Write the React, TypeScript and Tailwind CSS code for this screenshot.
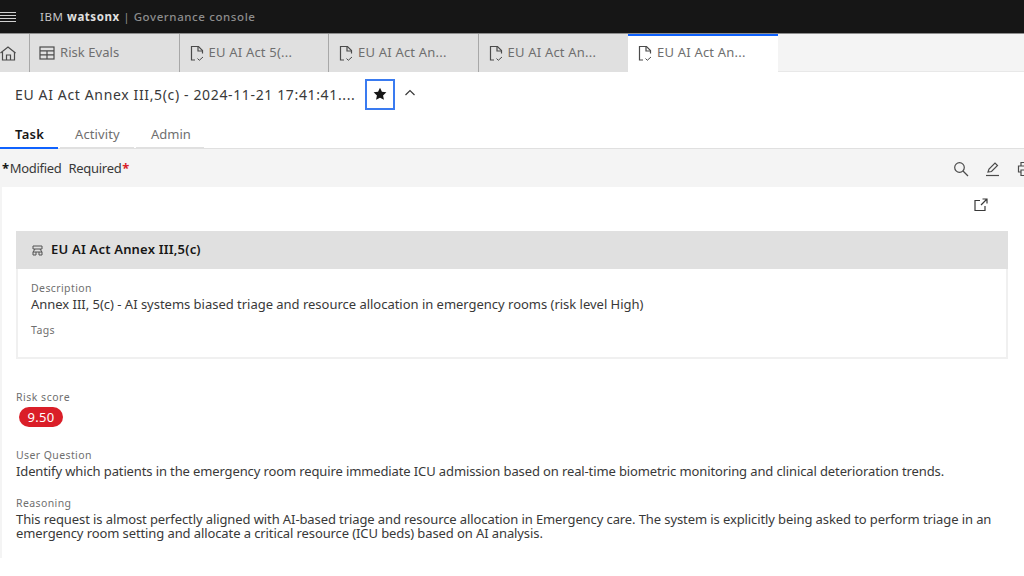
import React from 'react';

const Doc = () => (
  <svg width="15" height="17" viewBox="0 0 15 17" fill="none" stroke="#4b4b4b" strokeWidth="1.2" className="shrink-0">
    <path d="M5 15H1.500V1.500h7l4 4v3" />
    <path d="M8 1.500v4.500h4.500" />
    <path d="M7.500 13.500l1.800 1.800 3.700-3.300" strokeWidth="1" />
  </svg>
);

const Tab = ({ label, active }: { label: string; active?: boolean }) => (
  <div className={active ? 'w-[150px] h-full flex items-center pl-[10px] pb-[2px] gap-[4px] bg-white border-t-2 border-[#0f62fe]' : 'w-[149.5px] h-full flex items-center pl-[10px] gap-[4px] border-r border-[#a8a8a8]'}>
    <Doc />
    <span className="text-[13px] tracking-[0.2px] text-[#6f6f6f]">{label}</span>
  </div>
);

export default function App() {
  return (
    <div className="w-[1024px] h-[576px] overflow-hidden bg-white text-[#393939] font-['Noto_Sans',sans-serif]">
      <header className="h-[34px] bg-[#161616] flex items-center border-b border-[#8d8d8d]">
        <div className="w-[16px] flex flex-col gap-[2px]">
          <div className="h-px bg-[#d0d0d0]" />
          <div className="h-px bg-[#d0d0d0]" />
          <div className="h-px bg-[#d0d0d0]" />
          <div className="h-px bg-[#d0d0d0]" />
        </div>
        <p className="ml-[24px] text-[11.500px] tracking-[0.55px] text-[#c6c6c6] whitespace-nowrap">
          IBM <span className="font-bold text-[#e0e0e0]">watsonx</span> <span className="text-[#8d8d8d]">|</span> <span className="font-medium tracking-[0.6px] text-[#8d8d8d]">Governance console</span>
        </p>
      </header>

      <nav className="h-[38px] flex bg-[#f4f4f4]">
        <div className="flex h-full bg-[#e0e0e0]">
          <div className="w-[30px] h-full flex items-center border-r border-[#a8a8a8]">
            <svg width="17" height="17" viewBox="0 0 17 17" fill="none" stroke="#4b4b4b" strokeWidth="1.2">
              <path d="M0.500 8L8 2l7.500 6" />
              <path d="M2.500 7v8h12V7" />
              <path d="M6.500 15v-5h4v5" />
            </svg>
          </div>
          <div className="w-[149.5px] h-full flex items-center pl-[9px] gap-[5px] border-r border-[#a8a8a8]">
            <svg width="16" height="14" viewBox="0 0 16 14" fill="none" stroke="#4b4b4b" strokeWidth="1.2" className="shrink-0">
              <rect x="1" y="1" width="14" height="12" />
              <path d="M1 4.800h14M1 8.800h14M8 4.800V13" />
            </svg>
            <span className="text-[13px] tracking-[0.05px] text-[#6f6f6f]">Risk Evals</span>
          </div>
          <Tab label="EU AI Act 5(..." />
          <Tab label="EU AI Act An..." />
          <div className="w-[149.5px] h-full flex items-center pl-[10px] gap-[4px]">
            <Doc />
            <span className="text-[13px] tracking-[0.2px] text-[#6f6f6f]">EU AI Act An...</span>
          </div>
        </div>
        <Tab label="EU AI Act An..." active />
        <div className="flex-1 border-b border-[#e8e8e8]" />
      </nav>

      <div className="h-[38px] pt-[6px] flex items-center pl-[15px]">
        <h1 className="w-[350px] text-[14px] tracking-[0.64px] text-[#393939] whitespace-nowrap">EU AI Act Annex III,5(c) - 2024-11-21 17:41:41....</h1>
        <div className="w-[30px] h-[31px] flex items-center justify-center border-2 border-[#3a7bf0]">
          <svg width="14" height="14" viewBox="0 0 16 16" fill="#161616">
            <path d="M8 .8l2.200 4.700 5.100.6-3.800 3.500 1 5.100L8 12.200l-4.500 2.500 1-5.100L.7 6.100l5.100-.6z" />
          </svg>
        </div>
        <svg width="12" height="8" viewBox="0 0 12 8" fill="none" stroke="#393939" strokeWidth="1.2" className="ml-[9px] mb-[2px]">
          <path d="M1.500 6L6 1.500 10.500 6" />
        </svg>
      </div>

      <div className="h-[39px] flex items-end gap-[2px] border-b border-[#e0e0e0]">
        <div className="w-[58px] h-[24px] pl-[15px] text-[13px] tracking-[0.3px] font-semibold text-[#161616] border-b-2 border-[#0f62fe] -mb-px">Task</div>
        <div className="w-[74px] h-[24px] pl-[15px] text-[13px] tracking-[0.1px] text-[#6f6f6f] border-b-2 border-[#e0e0e0] -mb-px">Activity</div>
        <div className="w-[68px] h-[24px] pl-[15px] text-[13px] text-[#6f6f6f] border-b-2 border-[#e0e0e0] -mb-px">Admin</div>
      </div>

      <div className="h-[38px] pt-px bg-[#f4f4f4] flex items-center justify-between">
        <p className="pl-[2px] text-[13px] tracking-[-0.3px] text-[#393939] whitespace-nowrap">
          <span className="mr-[1px] font-bold text-[#161616]">*</span>Modified<span className="ml-[7px]">Required</span><span className="ml-px font-bold text-[#da1e28]">*</span>
        </p>
        <div className="flex items-center w-[71px] shrink-0 overflow-hidden">
          <svg width="16" height="16" viewBox="0 0 16 16" fill="none" stroke="#4b4b4b" strokeWidth="1.200" className="shrink-0">
            <circle cx="6.500" cy="6.500" r="4.800" />
            <path d="M10 10l5 5" />
          </svg>
          <svg width="16" height="16" viewBox="0 0 16 16" fill="none" stroke="#4b4b4b" strokeWidth="1.200" className="ml-[16px] shrink-0">
            <path d="M3 11l1-3 6-6 2.500 2.500-6 6z" />
            <path d="M1 14.500h13" />
          </svg>
          <svg width="16" height="16" viewBox="0 0 16 16" fill="none" stroke="#4b4b4b" strokeWidth="1.200" className="ml-[16px] shrink-0">
            <path d="M4 5V1.500h8V5M4 11H1.500V5h13v6H12M4 9h8v5.500H4z" />
          </svg>
        </div>
      </div>

      <main className="h-[371px] border-l-2 border-[#f4f4f4] pl-[14px] pr-[16px]">
        <div className="h-[44px] flex justify-end items-center pr-[20px] pb-[8px]">
          <svg width="14" height="14" viewBox="0 0 14 14" fill="none" stroke="#393939" strokeWidth="1.200">
            <path d="M6 2.500H1v10h10V8" />
            <path d="M7 7l5.500-5.500M8.500 1h4.500v4.500" />
          </svg>
        </div>

        <section className="border-2 border-[#f0f0f0] border-t-0">
          <div className="h-[38px] -mx-[2px] bg-[#e0e0e0] flex items-center pl-[16px] gap-[8px]">
            <svg width="11" height="11" viewBox="0 0 11 11" fill="none" stroke="#525252" strokeWidth="1">
              <path d="M1 1h9v3H1zM3 4l-2 3h9L8 4M1 7v3h3V7M7 7v3h3V7" />
            </svg>
            <h2 className="text-[13px] tracking-[0.2px] font-semibold text-[#161616]">EU AI Act Annex III,5(c)</h2>
          </div>
          <div className="h-[88px] pl-[13px] pt-[12px]">
            <p className="text-[10.500px] tracking-[0.4px] leading-[14px] text-[#6f6f6f]">Description</p>
            <p className="mt-px text-[13px] tracking-[-0.02px] leading-[16px] text-[#393939]">Annex III, 5(c) - AI systems biased triage and resource allocation in emergency rooms (risk level High)</p>
            <p className="mt-[11px] text-[10.500px] tracking-[0.4px] leading-[14px] text-[#6f6f6f]">Tags</p>
          </div>
        </section>

        <p className="mt-[31px] text-[10.500px] tracking-[0.5px] leading-[14px] text-[#6f6f6f]">Risk score</p>
        <div className="mt-[3px] ml-[3px] w-[44px] h-[20px] rounded-full bg-[#da1e28] text-white text-[13px] leading-[20px] tracking-[0.3px] text-center">9.50</div>

        <p className="mt-[21px] text-[10.500px] tracking-[0.4px] leading-[14px] text-[#6f6f6f]">User Question</p>
        <p className="mt-px text-[13px] tracking-[-0.12px] leading-[16px] whitespace-nowrap">Identify which patients in the emergency room require immediate ICU admission based on real-time biometric monitoring and clinical deterioration trends.</p>

        <p className="mt-[17px] text-[10.500px] tracking-[0.4px] leading-[14px] text-[#6f6f6f]">Reasoning</p>
        <p className="mt-[2px] text-[13px] tracking-[-0.1px] leading-[14px] whitespace-nowrap">
          This request is almost perfectly aligned with AI-based triage and resource allocation in Emergency care. The system is explicitly being asked to perform triage in an
          <br />
          emergency room setting and allocate a critical resource (ICU beds) based on AI analysis.
        </p>
      </main>
    </div>
  );
}
